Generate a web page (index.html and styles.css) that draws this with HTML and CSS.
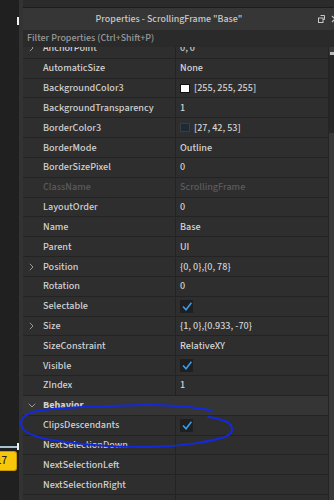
FILE: index.html
```html
<!DOCTYPE html>
<html lang="en">
<head>
    <meta charset="UTF-8">
    <meta name="viewport" content="width=device-width, initial-scale=1.0">
    <title>Properties - ScrollingFrame "Base"</title>
    <link rel="stylesheet" href="styles.css">
</head>
<body>
    <div class="studio">
        <div class="dock">
            <span class="handle handle-top"></span>
            <div class="timeline"><span class="handle handle-bottom"></span></div>
            <div class="badge">17</div>
        </div>

        <div class="panel">
            <div class="topstrip"></div>
            <div class="titlebar">
                <span class="title">Properties - ScrollingFrame "Base"</span>
                <span class="title-icons">
                    <svg width="7" height="8" viewBox="0 0 7 8">
                        <path d="M2.5 0.5h4v4h-1.5" fill="none" stroke="#c8c8c8" stroke-width="1"/>
                        <rect x="0.5" y="3" width="4.5" height="4.5" fill="none" stroke="#c8c8c8" stroke-width="1"/>
                    </svg>
                    <svg width="8" height="8" viewBox="0 0 8 8">
                        <path d="M1 1l6 6M7 1l-6 6" stroke="#c8c8c8" stroke-width="1.2"/>
                    </svg>
                </span>
            </div>
            <div class="filter">Filter Properties (Ctrl+Shift+P)</div>

            <div class="list">
                <div class="rows">
                    <div class="row">
                        <div class="name"><span class="exp"><svg width="5" height="8" viewBox="0 0 5 8"><path d="M0.8 0.8l3.2 3.2-3.2 3.2" fill="none" stroke="#9a9a9a" stroke-width="1"/></svg></span>AnchorPoint</div>
                        <div class="value">0, 0</div>
                    </div>
                    <div class="row">
                        <div class="name"><span class="exp"></span>AutomaticSize</div>
                        <div class="value">None</div>
                    </div>
                    <div class="row">
                        <div class="name"><span class="exp"></span>BackgroundColor3</div>
                        <div class="value"><span class="swatch" style="background-color: #ffffff"></span>[255, 255, 255]</div>
                    </div>
                    <div class="row">
                        <div class="name"><span class="exp"></span>BackgroundTransparency</div>
                        <div class="value">1</div>
                    </div>
                    <div class="row">
                        <div class="name"><span class="exp"></span>BorderColor3</div>
                        <div class="value"><span class="swatch dark" style="background-color: #1b2a35"></span>[27, 42, 53]</div>
                    </div>
                    <div class="row">
                        <div class="name"><span class="exp"></span>BorderMode</div>
                        <div class="value">Outline</div>
                    </div>
                    <div class="row">
                        <div class="name"><span class="exp"></span>BorderSizePixel</div>
                        <div class="value">0</div>
                    </div>
                    <div class="row disabled">
                        <div class="name"><span class="exp"></span>ClassName</div>
                        <div class="value">ScrollingFrame</div>
                    </div>
                    <div class="row">
                        <div class="name"><span class="exp"></span>LayoutOrder</div>
                        <div class="value">0</div>
                    </div>
                    <div class="row">
                        <div class="name"><span class="exp"></span>Name</div>
                        <div class="value">Base</div>
                    </div>
                    <div class="row">
                        <div class="name"><span class="exp"></span>Parent</div>
                        <div class="value">UI</div>
                    </div>
                    <div class="row">
                        <div class="name"><span class="exp"><svg width="5" height="8" viewBox="0 0 5 8"><path d="M0.8 0.8l3.2 3.2-3.2 3.2" fill="none" stroke="#9a9a9a" stroke-width="1"/></svg></span>Position</div>
                        <div class="value">{0, 0},{0, 78}</div>
                    </div>
                    <div class="row">
                        <div class="name"><span class="exp"></span>Rotation</div>
                        <div class="value">0</div>
                    </div>
                    <div class="row">
                        <div class="name"><span class="exp"></span>Selectable</div>
                        <div class="value"><span class="check"><svg width="13" height="13" viewBox="0 0 13 13"><path d="M3 6.6l3 3.2 5.4-7" fill="none" stroke="#3a9ff0" stroke-width="1.5"/></svg></span></div>
                    </div>
                    <div class="row">
                        <div class="name"><span class="exp"><svg width="5" height="8" viewBox="0 0 5 8"><path d="M0.8 0.8l3.2 3.2-3.2 3.2" fill="none" stroke="#9a9a9a" stroke-width="1"/></svg></span>Size</div>
                        <div class="value">{1, 0},{0.933, -70}</div>
                    </div>
                    <div class="row">
                        <div class="name"><span class="exp"></span>SizeConstraint</div>
                        <div class="value">RelativeXY</div>
                    </div>
                    <div class="row">
                        <div class="name"><span class="exp"></span>Visible</div>
                        <div class="value"><span class="check"><svg width="13" height="13" viewBox="0 0 13 13"><path d="M3 6.6l3 3.2 5.4-7" fill="none" stroke="#3a9ff0" stroke-width="1.5"/></svg></span></div>
                    </div>
                    <div class="row">
                        <div class="name"><span class="exp"></span>ZIndex</div>
                        <div class="value">1</div>
                    </div>
                    <div class="row category">
                        <span class="exp"><svg width="8" height="5" viewBox="0 0 8 5"><path d="M0.8 0.8l3.2 3.2 3.2-3.2" fill="none" stroke="#9a9a9a" stroke-width="1"/></svg></span>Behavior
                    </div>
                    <div class="row">
                        <div class="name"><span class="exp"></span>ClipsDescendants</div>
                        <div class="value"><span class="check"><svg width="13" height="13" viewBox="0 0 13 13"><path d="M3 6.6l3 3.2 5.4-7" fill="none" stroke="#3a9ff0" stroke-width="1.5"/></svg></span></div>
                    </div>
                    <div class="row">
                        <div class="name"><span class="exp"></span>NextSelectionDown</div>
                        <div class="value"></div>
                    </div>
                    <div class="row">
                        <div class="name"><span class="exp"></span>NextSelectionLeft</div>
                        <div class="value"></div>
                    </div>
                    <div class="row">
                        <div class="name"><span class="exp"></span>NextSelectionRight</div>
                        <div class="value"></div>
                    </div>
                    <div class="row">
                        <div class="name"><span class="exp"></span>NextSelectionUp</div>
                        <div class="value"></div>
                    </div>
                </div>
                <div class="scrollbar">
                    <span class="scroll-arrow"></span>
                    <div class="thumb"></div>
                </div>
            </div>
        </div>
    </div>

    <!-- blue marker circle drawn over the ClipsDescendants row -->
    <svg class="scribble" width="334" height="500" viewBox="0 0 334 500">
        <path d="M211.7 410.7C195 406 160 404.5 133 405.3C105 406 60 408 40 410.5C25 413 19 419 21.5 426C24 433 35 437.5 55 440.5C85 445 120 447.5 150 447C180 446.5 210 442 226 436.5C234 433 234 425 226 421.5C220 419 213 417.5 208 416.7" fill="none" stroke="#1428dc" stroke-width="2" stroke-linecap="round"/>
    </svg>
</body>
</html>
```

FILE: styles.css
```css
* {
    box-sizing: border-box;
}
body {
    margin: 0;
    width: 334px;
    height: 500px;
    overflow: hidden;
    position: relative;
    background-color: #202020;
    font-family: 'Source Sans 3', 'Lato', sans-serif;
    font-size: 10.2px;
    font-weight: 500;
    color: #d2d2d2;
}
.studio {
    display: flex;
    height: 500px;
}
.dock {
    width: 19px;
    flex: none;
    background-color: #202020;
    padding-top: 17px;
}
.handle {
    display: block;
    width: 2px;
    height: 8px;
    background: #f0f0f0;
}
.handle-top {
    margin-left: 17px;
}
.timeline {
    display: flex;
    align-items: center;
    height: 7px;
    margin-top: 418px;
}
.timeline::before {
    content: "";
    width: 17px;
    height: 2px;
    background: #a9c0cd;
}
.handle-bottom {
    height: 7px;
}
.badge {
    margin-top: 1px;
    width: 17px;
    height: 20px;
    background: #f8c60b;
    border: 1px solid #c99a00;
    border-left: none;
    border-radius: 0 3px 3px 0;
    color: #222222;
    font-size: 11px;
    line-height: 18px;
    text-indent: -4px;
    overflow: hidden;
}
.panel {
    flex: 1;
    min-width: 0;
    display: flex;
    flex-direction: column;
    border-left: 4px solid #333333;
    background: #2e2e2e;
}
.topstrip {
    height: 8px;
    flex: none;
    background: #2b2b2b;
    border-bottom: 1px solid #1c1c1c;
}
.titlebar {
    height: 22px;
    flex: none;
    display: flex;
    align-items: center;
    background: #363636;
}
.title {
    flex: 1;
    text-align: center;
    color: #cacaca;
    font-size: 10px;
}
.title-icons {
    width: 19px;
    flex: none;
    display: flex;
    gap: 6px;
    padding-left: 3px;
}
.title-icons svg {
    flex: none;
}
.filter {
    height: 17px;
    flex: none;
    padding-left: 4px;
    line-height: 17px;
    background: #2a2a2a;
    color: #9a9a9a;
    font-size: 10px;
}
.list {
    flex: 1;
    display: flex;
    overflow: hidden;
}
.rows {
    flex: 1;
    margin-top: -8px;
}
.row {
    display: grid;
    grid-template-columns: 153px 1fr;
    height: 19.84px;
    border-bottom: 1px solid #232323;
}
.name {
    display: flex;
    align-items: center;
    border-right: 1px solid #232323;
    white-space: nowrap;
    overflow: hidden;
}
.exp {
    width: 20px;
    flex: none;
    display: flex;
    align-items: center;
    padding-left: 6px;
}
.value {
    display: flex;
    align-items: center;
    padding-left: 4px;
    color: #d6d6d6;
    white-space: nowrap;
}
.disabled .name,
.disabled .value {
    color: #5c5c5c;
}
.swatch {
    width: 10px;
    height: 9px;
    margin-right: 4px;
    border: 1px solid #111111;
}
.swatch.dark {
    border-color: #3c3c3c;
}
.check {
    display: flex;
    width: 13px;
    height: 13px;
    background: #1f1f1f;
    border-radius: 1px;
}
.category {
    display: flex;
    align-items: center;
    background: #353535;
    font-weight: bold;
}
.category .exp {
    padding-left: 5px;
}
.scrollbar {
    width: 6px;
    flex: none;
    background: #393939;
    border-left: 1px solid #242424;
    padding-top: 5px;
}
.scroll-arrow {
    display: block;
    width: 4px;
    height: 3px;
    margin-left: 1px;
    background: #bcbcbc;
}
.thumb {
    height: 78px;
    background: #272727;
}
.scribble {
    position: absolute;
    left: 0;
    top: 0;
    pointer-events: none;
}
```
